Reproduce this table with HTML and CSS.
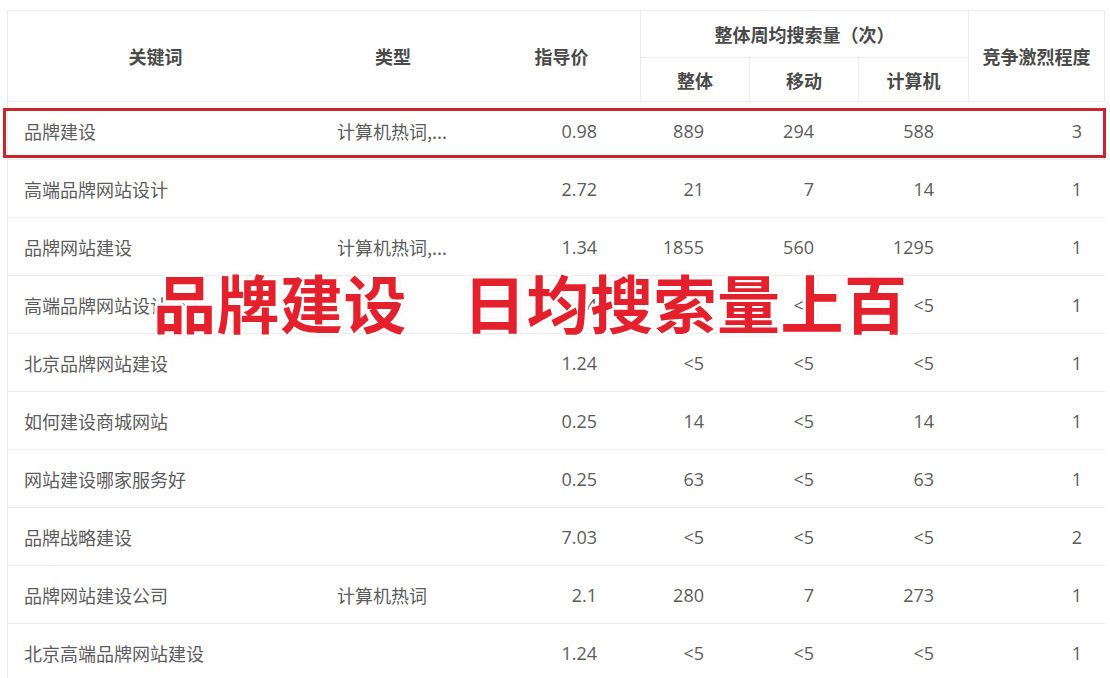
FILE: index.html
```html
<!DOCTYPE html>
<html lang="zh-CN">
<head>
<meta charset="utf-8">
<title>关键词</title>
<link rel="stylesheet" href="styles.css">
</head>
<body>
<div class="page">
  <table class="kw-table">
    <colgroup>
      <col class="c-kw"><col class="c-type"><col class="c-price"><col class="c-all"><col class="c-mob"><col class="c-pc"><col class="c-comp">
    </colgroup>
    <thead>
      <tr class="h1">
        <th rowspan="2">关键词</th>
        <th rowspan="2">类型</th>
        <th rowspan="2">指导价</th>
        <th colspan="3" class="bl">整体周均搜索量（次）</th>
        <th rowspan="2" class="bl br">竞争激烈程度</th>
      </tr>
      <tr class="h2">
        <th class="bl">整体</th>
        <th class="bl">移动</th>
        <th class="bl">计算机</th>
      </tr>
    </thead>
    <tbody>
      <tr><td class="kw">品牌建设</td><td class="type">计算机热词,...</td><td class="price">0.98</td><td class="all">889</td><td class="mob">294</td><td class="pc">588</td><td class="comp">3</td></tr>
      <tr><td class="kw">高端品牌网站设计</td><td class="type"></td><td class="price">2.72</td><td class="all">21</td><td class="mob">7</td><td class="pc">14</td><td class="comp">1</td></tr>
      <tr><td class="kw">品牌网站建设</td><td class="type">计算机热词,...</td><td class="price">1.34</td><td class="all">1855</td><td class="mob">560</td><td class="pc">1295</td><td class="comp">1</td></tr>
      <tr><td class="kw">高端品牌网站设计公司</td><td class="type"></td><td class="price">1.24</td><td class="all">&lt;5</td><td class="mob">&lt;5</td><td class="pc">&lt;5</td><td class="comp">1</td></tr>
      <tr><td class="kw">北京品牌网站建设</td><td class="type"></td><td class="price">1.24</td><td class="all">&lt;5</td><td class="mob">&lt;5</td><td class="pc">&lt;5</td><td class="comp">1</td></tr>
      <tr><td class="kw">如何建设商城网站</td><td class="type"></td><td class="price">0.25</td><td class="all">14</td><td class="mob">&lt;5</td><td class="pc">14</td><td class="comp">1</td></tr>
      <tr><td class="kw">网站建设哪家服务好</td><td class="type"></td><td class="price">0.25</td><td class="all">63</td><td class="mob">&lt;5</td><td class="pc">63</td><td class="comp">1</td></tr>
      <tr><td class="kw">品牌战略建设</td><td class="type"></td><td class="price">7.03</td><td class="all">&lt;5</td><td class="mob">&lt;5</td><td class="pc">&lt;5</td><td class="comp">2</td></tr>
      <tr><td class="kw">品牌网站建设公司</td><td class="type">计算机热词</td><td class="price">2.1</td><td class="all">280</td><td class="mob">7</td><td class="pc">273</td><td class="comp">1</td></tr>
      <tr><td class="kw">北京高端品牌网站建设</td><td class="type"></td><td class="price">1.24</td><td class="all">&lt;5</td><td class="mob">&lt;5</td><td class="pc">&lt;5</td><td class="comp">1</td></tr>
    </tbody>
  </table>
  <div class="highlight"></div>
  <div class="caption"><span>品牌建设</span><span>日均搜索量上百</span></div>
</div>
</body>
</html>
```

FILE: styles.css
```css
html, body {
  margin: 0;
  padding: 0;
  background: #ffffff;
}

.page {
  position: relative;
  padding: 10px 0 0 7px;
  font-family: "Open Sans", "Noto Sans CJK SC", sans-serif;
}

.kw-table {
  border-collapse: separate;
  border-spacing: 0;
  table-layout: fixed;
  width: 1098px;
  border-top: 1px solid #ececec;
  border-left: 1px solid #ececec;
}

.c-kw { width: 295px; }
.c-type { width: 180px; }
.c-price { width: 157px; }
.c-all { width: 109px; }
.c-mob { width: 109px; }
.c-pc { width: 110px; }
.c-comp { width: 137px; }

.kw-table th {
  font-family: "Noto Sans CJK SC", sans-serif;
  font-weight: 700;
  font-size: 18px;
  color: #4a4a4a;
  text-align: center;
  vertical-align: middle;
  padding: 0;
  border-bottom: 1px solid #ececec;
}

.kw-table .h1 th { height: 46px; }
.kw-table .h2 th { height: 43px; }

.kw-table th.bl { border-left: 1px solid #ececec; }
.kw-table th.br { border-right: 1px solid #ececec; }

.kw-table td {
  height: 57px;
  padding: 0;
  font-size: 18px;
  color: #5c5c5c;
  vertical-align: middle;
  border-bottom: 1px solid #ececec;
  white-space: nowrap;
  overflow: hidden;
}

.kw-table td.kw { padding-left: 16px; font-family: "Noto Sans CJK SC", sans-serif; }
.kw-table td.type { padding-left: 34px; font-family: "Noto Sans CJK SC", sans-serif; }
.kw-table td.price { text-align: right; padding-right: 43px; }
.kw-table td.all { text-align: right; padding-right: 45px; }
.kw-table td.mob { text-align: right; padding-right: 44px; }
.kw-table td.pc { text-align: right; padding-right: 34px; }
.kw-table td.comp { text-align: right; padding-right: 23px; }

.highlight {
  position: absolute;
  left: 3px;
  top: 108px;
  width: 1097px;
  height: 44px;
  border: 3px solid #c8262f;
}

.caption {
  position: absolute;
  left: 153px;
  top: 269px;
  display: flex;
  gap: 56px;
  font-family: "Noto Sans CJK SC", sans-serif;
  font-weight: 700;
  font-size: 63px;
  letter-spacing: 0.5px;
  line-height: 1;
  color: #e3202b;
  white-space: nowrap;
  text-shadow:
    2px 0 0 #fff, -2px 0 0 #fff, 0 2px 0 #fff, 0 -2px 0 #fff,
    2px 2px 0 #fff, -2px -2px 0 #fff, 2px -2px 0 #fff, -2px 2px 0 #fff,
    3px 0 0 #fff, -3px 0 0 #fff, 0 3px 0 #fff, 0 -3px 0 #fff,
    0 0 5px rgba(120, 120, 120, 0.6);
}
```
